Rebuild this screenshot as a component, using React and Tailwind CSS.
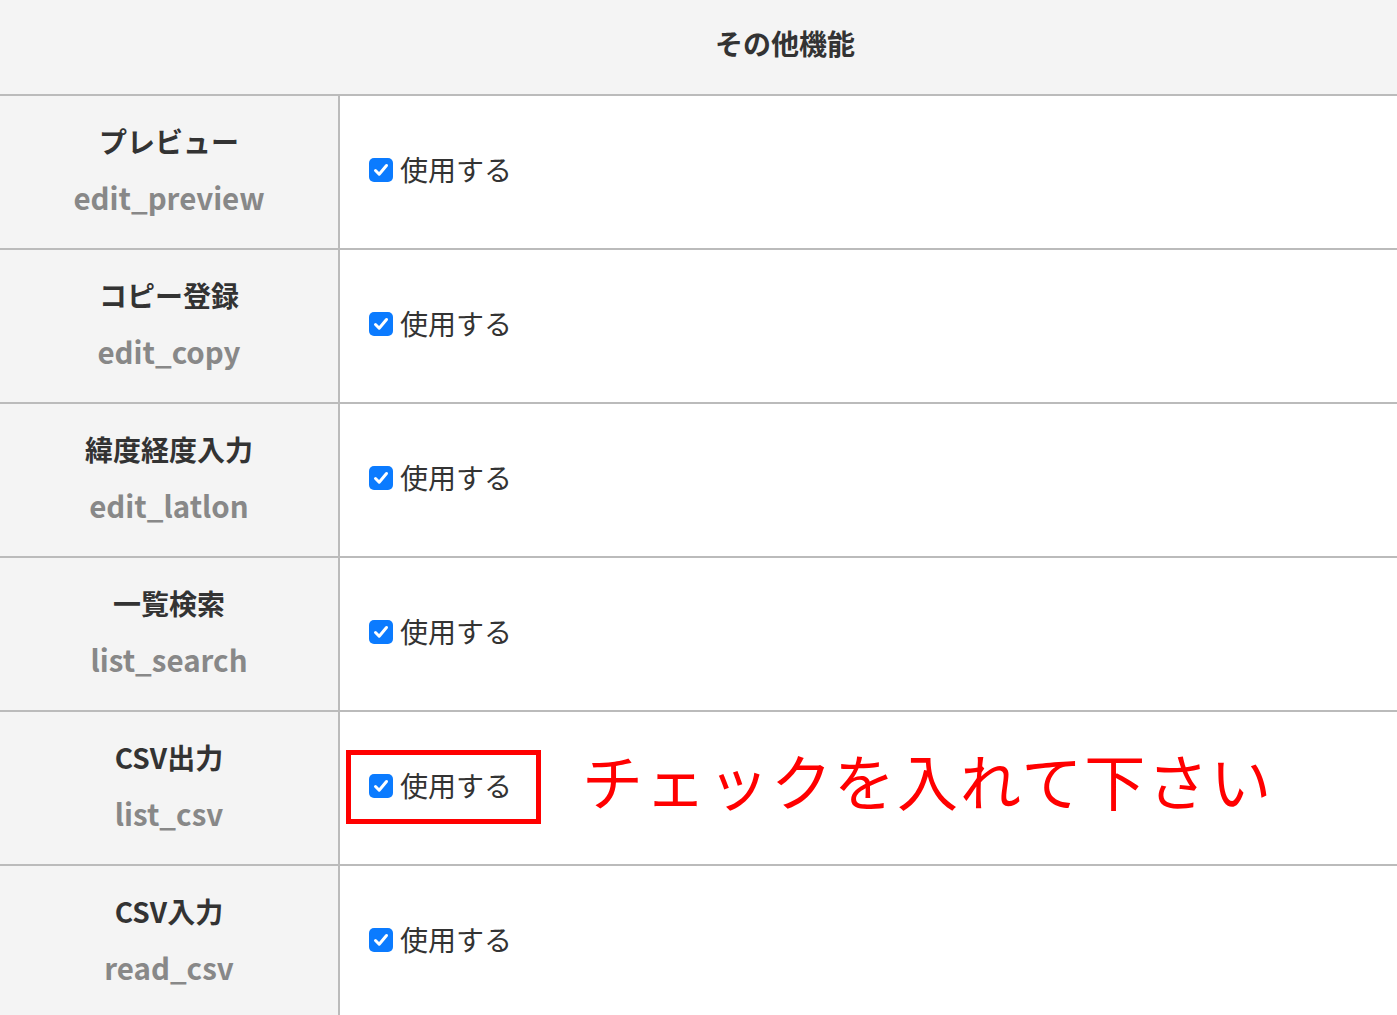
const FONT = { fontFamily: '"Noto Sans CJK JP", "Noto Sans", sans-serif' };

const ROWS = [
  { label: "プレビュー", key: "edit_preview" },
  { label: "コピー登録", key: "edit_copy" },
  { label: "緯度経度入力", key: "edit_latlon" },
  { label: "一覧検索", key: "list_search" },
  { label: "CSV出力", key: "list_csv", note: true },
  { label: "CSV入力", key: "read_csv" },
];

function CheckBox() {
  return (
    <span className="w-[24px] h-[24px] rounded-[5px] bg-[#0b7bff] flex items-center justify-center shrink-0">
      <svg width="18" height="18" viewBox="0 0 18 18" fill="none">
        <path d="M3.5 9.5 L7.2 13.2 L14.5 4.5" stroke="white" strokeWidth="3" strokeLinecap="round" strokeLinejoin="round" />
      </svg>
    </span>
  );
}

function UseCheck({ boxed }) {
  return (
    <div className="relative flex items-center gap-[7px]">
      <CheckBox />
      <span className="text-[28px] leading-none text-[#333] pb-[2px]">使用する</span>
      {boxed && (
        <span className="absolute left-[-23px] right-[-29px] top-[-21px] bottom-[-23px] border-[5px] border-[#ff0000]" />
      )}
    </div>
  );
}

export default function App() {
  return (
    <div className="w-full min-h-screen overflow-hidden bg-white" style={FONT}>
      <div className="w-[1570px]">
        <div className="h-[96px] bg-[#f4f4f4] border-b-2 border-[#bbb] flex items-center justify-center">
          <span className="text-[28px] font-bold text-[#333] pb-[8px]">その他機能</span>
        </div>

        {ROWS.map((r) => (
          <div key={r.key} className="flex h-[154px] border-b-2 border-[#bbb]">
            <div className="w-[340px] shrink-0 bg-[#f4f4f4] border-r-2 border-[#bbb] flex flex-col items-center pt-[17px]">
              <div className="h-[56px] flex items-center text-[28px] font-bold text-[#333]">{r.label}</div>
              <div className="h-[56px] flex items-center text-[29.5px] font-bold text-[#888]">{r.key}</div>
            </div>
            <div className="flex-1 flex items-center pl-[29px] pb-[4px]">
              <UseCheck boxed={r.note} />
              {r.note && (
                <span className="ml-[70px] text-[61px] leading-none tracking-[2px] text-[#ff0000] pb-[14px]">
                  チェックを入れて下さい
                </span>
              )}
            </div>
          </div>
        ))}
      </div>
    </div>
  );
}
